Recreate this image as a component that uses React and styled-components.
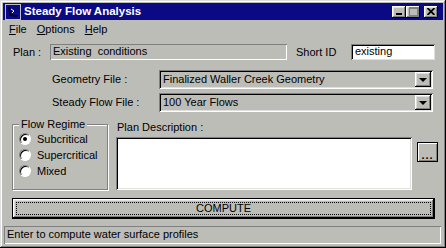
import React from 'react'
import styled, { createGlobalStyle } from 'styled-components'

const FACE = '#bdbdb8'

const GlobalStyle = createGlobalStyle`
  html, body { margin:0; padding:0; background:${FACE}; }
  * { box-sizing:border-box; }
`

const raised = `box-shadow: inset -1px -1px #000, inset 1px 1px #fff, inset -2px -2px #808080, inset 2px 2px #dfdfdf;`
const sunken = `box-shadow: inset 1px 1px #808080, inset -1px -1px #fff, inset 2px 2px #000, inset -2px -2px #dfdfdf;`

const Window = styled.div`
    width:446px;
    height:248px;
    padding:3px;
    display:flex;
    flex-direction:column;
    background:${FACE};
    font-family:"Liberation Sans", Arial, sans-serif;
    font-size:11px;
    line-height:13px;
    color:#000;
    box-shadow: inset -1px -1px #000, inset 1px 1px #dfdfdf, inset -2px -2px #808080, inset 2px 2px #fff;`

const TitleBar = styled.div`
    height:17px;
    display:flex;
    align-items:center;
    padding:0 5px 0 2px;
    background:#0a0a84;`

const TitleIcon = styled.svg`
    width:16px;
    height:16px;
    margin-right:3px;
    flex:none;`

const TitleText = styled.span`
    flex:1;
    color:#fff;
    font-weight:bold;
    font-size:11.5px;`

const CtrlButton = styled.div`
    width:14px;
    height:12px;
    margin-left:${p => p.$gap || 0}px;
    background:${FACE};
    display:flex;
    align-items:center;
    justify-content:center;
    ${raised}`

const MenuBar = styled.div`
    height:18px;
    display:flex;
    align-items:center;
    gap:10px;
    padding-left:6px;`

const MenuItem = styled.span`
    u { text-decoration:underline; }`

const Row = styled.div`
    display:flex;
    align-items:center;
    margin-top:${p => p.$top}px;
    padding-left:${p => p.$left}px;`

const Label = styled.span`
    width:${p => p.$w}px;
    flex:none;
    white-space:nowrap;`

const PlanField = styled.div`
    width:237px;
    height:16px;
    padding:1px 3px 0;
    box-shadow: inset 1px 1px #808080, inset -1px -1px #fff;
    white-space:nowrap;`

const TextInput = styled.div`
    width:84px;
    height:16px;
    padding:1px 4px 0;
    background:#fff;
    box-shadow: inset 1px 1px #808080, inset -1px -1px #dfdfdf, inset 2px 2px #000;`

const Select = styled.div`
    width:274px;
    height:19px;
    display:flex;
    align-items:center;
    padding:0 2px 0 4px;
    ${sunken}`

const SelectText = styled.span`
    flex:1;
    white-space:nowrap;`

const ArrowButton = styled.div`
    width:16px;
    height:15px;
    display:flex;
    align-items:center;
    justify-content:center;
    background:${FACE};
    ${raised}`

const Triangle = styled.div`
    width:0;
    height:0;
    border-left:4px solid transparent;
    border-right:4px solid transparent;
    border-top:4px solid #000;`

const Bottom = styled.div`
    display:flex;
    margin-top:6px;
    padding-left:9px;`

const GroupBox = styled.fieldset`
    width:96px;
    height:72px;
    margin:0;
    padding:0 0 0 6px;
    border:1px solid #808080;
    box-shadow: 1px 1px 0 #fff, inset 1px 1px 0 #fff;`

const Legend = styled.legend`
    padding:0 2px;
    background:${FACE};`

const RadioRow = styled.label`
    height:16px;
    display:flex;
    align-items:center;
    gap:6px;`

const RadioDot = styled.span`
    width:12px;
    height:12px;
    border-radius:50%;
    background:#fff;
    border:1px solid;
    border-color:#808080 #fff #fff #808080;
    box-shadow: inset 1px 1px #000;
    display:flex;
    align-items:center;
    justify-content:center;
    &::after {
        content:'';
        width:4px;
        height:4px;
        border-radius:50%;
        background:${p => (p.$on ? '#000' : 'transparent')};
    }`

const DescColumn = styled.div`
    margin-left:8px;
    display:flex;
    flex-direction:column;`

const DescLabel = styled.span`
    margin:3px 0 3px 1px;`

const DescRow = styled.div`
    display:flex;
    align-items:flex-start;`

const TextArea = styled.div`
    width:296px;
    height:53px;
    background:#fff;
    ${sunken}`

const DotsButton = styled.div`
    width:21px;
    height:20px;
    margin:5px 0 0 5px;
    display:flex;
    align-items:flex-end;
    justify-content:center;
    padding-bottom:3px;
    font-weight:bold;
    letter-spacing:1px;
    line-height:8px;
    background:${FACE};
    box-shadow: inset 0 0 0 1px #000, inset 2px 2px #fff, inset -2px -2px #808080;`

const ComputeButton = styled.div`
    height:21px;
    margin:8px 8px 0 9px;
    padding:3px;
    border:1px solid #000;
    background:${FACE};
    ${raised}`

const FocusRect = styled.div`
    height:100%;
    border:1px dotted #000;
    display:flex;
    align-items:center;
    justify-content:center;`

const StatusBar = styled.div`
    height:18px;
    margin:7px 2px 0 1px;
    padding:2px 3px 0;
    box-shadow: inset 1px 1px #808080, inset -1px -1px #fff;`

function App() {
    return (
        <Window>
            <GlobalStyle />
            <TitleBar>
                <TitleIcon viewBox="0 0 16 16">
                    <rect x="0.5" y="0.5" width="15" height="15" fill="#0a0a84" stroke="#c0c0c0" />
                    <path d="M4 3 L5 11 L12 12" stroke="#000" strokeWidth="1.5" fill="none" />
                    <path d="M6 5 L9 7 L7 9" stroke="#fff" strokeWidth="1" fill="none" />
                </TitleIcon>
                <TitleText>Steady Flow Analysis</TitleText>
                <CtrlButton>
                    <svg width="8" height="8" viewBox="0 0 8 8"><rect x="1" y="5" width="6" height="2" fill="#000" /></svg>
                </CtrlButton>
                <CtrlButton>
                    <svg width="9" height="9" viewBox="0 0 9 9"><rect x="0.5" y="0.5" width="8" height="8" fill="none" stroke="#808080" /><rect x="1" y="1" width="7" height="1" fill="#808080" /></svg>
                </CtrlButton>
                <CtrlButton $gap={4}>
                    <svg width="8" height="7" viewBox="0 0 8 7"><path d="M0.5 0 L7.5 7 M7.5 0 L0.5 7" stroke="#000" strokeWidth="1.8" /></svg>
                </CtrlButton>
            </TitleBar>
            <MenuBar>
                <MenuItem><u>F</u>ile</MenuItem>
                <MenuItem><u>O</u>ptions</MenuItem>
                <MenuItem><u>H</u>elp</MenuItem>
            </MenuBar>
            <Row $top={6} $left={10}>
                <Label $w={37}>Plan :</Label>
                <PlanField>Existing&nbsp; conditions</PlanField>
                <Label $w={55} style={{ marginLeft: 9 }}>Short ID</Label>
                <TextInput>existing</TextInput>
            </Row>
            <Row $top={10} $left={49}>
                <Label $w={107}>Geometry File :</Label>
                <Select>
                    <SelectText>Finalized Waller Creek Geometry</SelectText>
                    <ArrowButton><Triangle /></ArrowButton>
                </Select>
            </Row>
            <Row $top={4} $left={49}>
                <Label $w={107}>Steady Flow File :</Label>
                <Select>
                    <SelectText>100 Year Flows</SelectText>
                    <ArrowButton><Triangle /></ArrowButton>
                </Select>
            </Row>
            <Bottom>
                <GroupBox>
                    <Legend>Flow Regime</Legend>
                    <RadioRow><RadioDot $on />Subcritical</RadioRow>
                    <RadioRow><RadioDot />Supercritical</RadioRow>
                    <RadioRow><RadioDot />Mixed</RadioRow>
                </GroupBox>
                <DescColumn>
                    <DescLabel>Plan Description :</DescLabel>
                    <DescRow>
                        <TextArea />
                        <DotsButton>...</DotsButton>
                    </DescRow>
                </DescColumn>
            </Bottom>
            <ComputeButton>
                <FocusRect>COMPUTE</FocusRect>
            </ComputeButton>
            <StatusBar>Enter to compute water surface profiles</StatusBar>
        </Window>
    )
}

export default App
